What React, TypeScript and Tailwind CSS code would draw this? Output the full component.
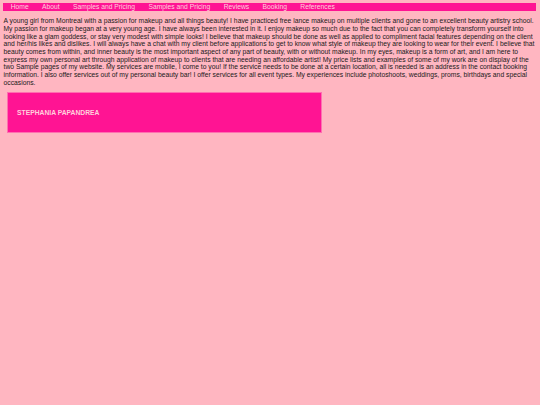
const links = [
  "Home",
  "About",
  "Samples and Pricing",
  "Samples and Pricing",
  "Reviews",
  "Booking",
  "References",
];

export default function App() {
  return (
    <div className="min-h-[405px] w-[540px] bg-[#ffb6c1] pl-[3px] pr-[4px] pt-[3px] font-['Liberation_Sans',Arial,sans-serif] text-[6.75px] leading-[7.67px] text-[#1a1a1a]">
      <nav className="flex bg-[#ff1493] px-[1px]">
        {links.map((l, i) => (
          <a key={i} href="#" className="px-[6.7px] text-[#ffd0dc]">
            {l}
          </a>
        ))}
      </nav>

      <p className="mt-[6.5px] pl-[0.5px]">
        A young girl from Montreal with a passion for makeup and all things beauty! I have practiced free lance makeup
        on multiple clients and gone to an excellent beauty artistry school. My passion for makeup began at a very young
        age. I have always been interested in it. I enjoy makeup so much due to the fact that you can completely
        transform yourself into looking like a glam goddess, or stay very modest with simple looks! I believe that makeup
        should be done as well as applied to compliment facial features depending on the client and her/his likes and
        dislikes. I will always have a chat with my client before applications to get to know what style of makeup they
        are looking to wear for their event. I believe that beauty comes from within, and inner beauty is the most
        important aspect of any part of beauty, with or without makeup. In my eyes, makeup is a form of art, and I am
        here to express my own personal art through application of makeup to clients that are needing an affordable
        artist! My price lists and examples of some of my work are on display of the two Sample pages of my website. My
        services are mobile, I come to you! If the service needs to be done at a certain location, all is needed is an
        address in the contact booking information. I also offer services out of my personal beauty bar! I offer
        services for all event types. My experiences include photoshoots, weddings, proms, birthdays and special
        occasions.
      </p>

      <div className="ml-[4px] mt-[6px] w-[315px] border border-[#ff6fb0] bg-[#ff1493] px-[9px] py-[15.5px]">
        <h2 className="font-bold text-[#ffd0dc]">STEPHANIA PAPANDREA</h2>
      </div>
    </div>
  );
}
